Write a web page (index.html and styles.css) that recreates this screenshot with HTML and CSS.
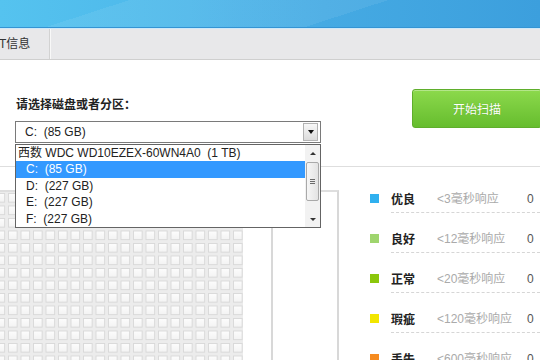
FILE: index.html
```html
<!DOCTYPE html>
<html lang="zh-CN">
<head>
<meta charset="utf-8">
<title>磁盘扫描</title>
<link rel="stylesheet" href="styles.css">
</head>
<body>
<div class="app">
  <header class="titlebar"></header>
  <nav class="tabs">
    <div class="tab">T信息</div>
    <div class="tab-sep"></div>
  </nav>
  <section class="top">
    <div class="picker">
      <div class="picker-label">请选择磁盘或者分区：</div>
      <div class="combo">
        <span class="combo-text">C:&nbsp;&nbsp;(85 GB)</span>
        <span class="combo-btn"><span class="arrow-down"></span></span>
        <div class="dropdown">
          <ul class="dd-list">
            <li class="dd-item disk">西数 WDC WD10EZEX-60WN4A0&nbsp;&nbsp;(1 TB)</li>
            <li class="dd-item part sel">C:&nbsp;&nbsp;(85 GB)</li>
            <li class="dd-item part">D:&nbsp;&nbsp;(227 GB)</li>
            <li class="dd-item part">E:&nbsp;&nbsp;(227 GB)</li>
            <li class="dd-item part">F:&nbsp;&nbsp;(227 GB)</li>
          </ul>
          <div class="dd-scroll">
            <div class="sb-arrow"><span class="tri-up"></span></div>
            <div class="sb-thumb"><span class="grip"></span><span class="grip"></span><span class="grip"></span></div>
            <div class="sb-track"></div>
            <div class="sb-arrow"><span class="tri-down"></span></div>
          </div>
        </div>
      </div>
    </div>
    <button class="scan-btn">开始扫描</button>
  </section>
  <section class="bottom">
    <div class="map-panel">
      <div class="map-area">
        <div class="map-grid"></div>
      </div>
    </div>
    <ul class="legend">
      <li class="legend-item"><span class="swatch c-good"></span><div class="legend-body"><span class="legend-name">优良</span><span class="legend-desc">&lt;3毫秒响应</span><span class="legend-count">0</span></div></li>
      <li class="legend-item"><span class="swatch c-fine"></span><div class="legend-body"><span class="legend-name">良好</span><span class="legend-desc">&lt;12毫秒响应</span><span class="legend-count">0</span></div></li>
      <li class="legend-item"><span class="swatch c-normal"></span><div class="legend-body"><span class="legend-name">正常</span><span class="legend-desc">&lt;20毫秒响应</span><span class="legend-count">0</span></div></li>
      <li class="legend-item"><span class="swatch c-flaw"></span><div class="legend-body"><span class="legend-name">瑕疵</span><span class="legend-desc">&lt;120毫秒响应</span><span class="legend-count">0</span></div></li>
      <li class="legend-item"><span class="swatch c-lost"></span><div class="legend-body"><span class="legend-name">丢失</span><span class="legend-desc">&lt;600毫秒响应</span><span class="legend-count">0</span></div></li>
    </ul>
  </section>
</div>
</body>
</html>
```
FILE: styles.css
```css
* { box-sizing: border-box; margin: 0; padding: 0; }
html, body { width: 540px; height: 360px; overflow: hidden; background: #fff; }
body {
  font-family: "Liberation Sans", "Noto Sans CJK SC", sans-serif;
  font-size: 12px;
  color: #333;
}
.app { display: flex; flex-direction: column; width: 540px; height: 360px; overflow: hidden; }

.titlebar {
  flex: none;
  height: 29px;
  border-bottom: 1px solid #cfe9f8;
  box-shadow: inset 0 -1px 0 #3494d4;
  background:
    linear-gradient(162deg, rgba(255,255,255,0) 0 40px, rgba(255,255,255,0.07) 40px 120px, rgba(255,255,255,0) 120px),
    linear-gradient(to right, #55c3ef 0%, #4db7ea 35%, #45aae3 60%, #3c9fdd 100%);
}

.tabs {
  flex: none;
  height: 31px;
  display: flex;
  background: #e8e8ea;
  border-bottom: 1px solid #cfcfcf;
}
.tab {
  width: 50px;
  margin-left: -1px;
  line-height: 30px;
  font-family: "Liberation Sans", "Noto Sans CJK SC", sans-serif;
  font-size: 12px;
  color: #333;
}
.tab-sep { width: 2px; border-left: 1px solid #d2d2d2; background: #f8f8f8; }

.top {
  flex: none;
  height: 107px;
  display: flex;
  border-bottom: 1px solid #dedede;
}
.picker { flex: none; margin-left: 15px; width: 306px; padding-top: 36px; }
.picker-label {
  font-family: "Noto Sans CJK SC", sans-serif;
  font-weight: bold;
  font-size: 12px;
  line-height: 16px;
  color: #222;
  padding-left: 1px;
}
.combo {
  position: relative;
  margin-top: 9px;
  height: 22px;
  border: 1px solid #7a7a7a;
  display: flex;
  align-items: center;
  background: #fff;
}
.combo-text { flex: 1; padding-left: 9px; color: #222; }
.combo-btn {
  width: 15px;
  height: 18px;
  margin-right: 2px;
  border: 1px solid #b3b3b3;
  background: linear-gradient(#f8f8f8, #dcdcdc);
  display: flex;
  align-items: center;
  justify-content: center;
}
.arrow-down {
  width: 0; height: 0;
  border-left: 3.5px solid transparent;
  border-right: 3.5px solid transparent;
  border-top: 4px solid #111;
}

.dropdown {
  position: absolute;
  left: -1px;
  top: 22px;
  width: 306px;
  height: 84px;
  border: 1px solid #646464;
  background: #fff;
  display: flex;
  z-index: 5;
}
.dd-list { flex: 1; list-style: none; }
.dd-item { height: 16.4px; line-height: 16.4px; white-space: nowrap; color: #222; }
.disk { padding-left: 2px; }
.part { padding-left: 10px; }
.sel { background: #3399ff; color: #fff; }

.dd-scroll {
  width: 15px;
  background: #f2f2f2;
  display: flex;
  flex-direction: column;
  align-items: center;
}
.sb-arrow { height: 16px; width: 100%; display: flex; align-items: center; justify-content: center; }
.tri-up { width: 0; height: 0; border-left: 3px solid transparent; border-right: 3px solid transparent; border-bottom: 3px solid #333; }
.tri-down { width: 0; height: 0; border-left: 3px solid transparent; border-right: 3px solid transparent; border-top: 3px solid #333; }
.sb-thumb {
  margin-top: 1px;
  width: 13px;
  height: 39px;
  border: 1px solid #a9a9a9;
  border-radius: 2px;
  background: linear-gradient(to right, #f6f6f6, #e3e3e3);
  display: flex;
  flex-direction: column;
  align-items: center;
  justify-content: center;
  gap: 1px;
}
.grip { width: 5px; height: 1px; background: #6b6b6b; }
.sb-track { flex: 1; }

.scan-btn {
  flex: none;
  margin-left: auto;
  margin-right: -2px;
  margin-top: 29px;
  width: 130px;
  height: 39px;
  border: 1px solid #5fae2c;
  border-radius: 3px;
  background: linear-gradient(#8cd94c, #66bd2e);
  box-shadow: inset 0 1px 0 rgba(255,255,255,0.35);
  color: #fff;
  font-family: "Noto Sans CJK SC", sans-serif;
  font-size: 12px;
  text-shadow: 0 0 1px rgba(60,120,20,0.4);
}

.bottom { flex: 1; display: flex; min-height: 0; }
.map-panel {
  flex: none;
  margin-left: -10px;
  margin-top: 23px;
  width: 349px;
  border-top: 2px solid #dedede;
  border-right: 2px solid #d8d8d8;
  display: flex;
}
.map-area { width: 283px; border-right: 2px solid #d8d8d8; }
.map-grid {
  width: 253px;
  height: 100%;
  background-image:
    linear-gradient(to right, transparent 10px, #ececec 10px),
    linear-gradient(to bottom, transparent 10px, #ececec 10px),
    linear-gradient(to right, #d9d9d9 1px, transparent 1px, transparent 9px, #d9d9d9 9px),
    linear-gradient(to bottom, #d9d9d9 1px, transparent 1px, transparent 9px, #d9d9d9 9px),
    linear-gradient(#fdfdfd, #efefef);
  background-size: 12.5px 12.5px;
  background-position: 5.5px 1px;
}

.legend { list-style: none; margin-left: 31px; padding-top: 6px; flex: 1; }
.legend-item { display: flex; height: 40px; }
.swatch { flex: none; width: 9px; height: 9px; margin-top: 21px; margin-right: 12px; }
.c-good { background: #30b0ef; }
.c-fine { background: #9fd56e; }
.c-normal { background: #8bc70b; }
.c-flaw { background: #f2e600; }
.c-lost { background: #f68b1f; }
.legend-body {
  flex: 1;
  display: flex;
  padding-top: 18px;
  border-bottom: 1px dashed #d6d6d6;
  line-height: 16px;
  white-space: nowrap;
}
.legend-name { width: 46px; font-family: "Noto Sans CJK SC", sans-serif; font-weight: bold; color: #222; }
.legend-desc { width: 90px; color: #aaa; }
.legend-count { color: #555; }
```
